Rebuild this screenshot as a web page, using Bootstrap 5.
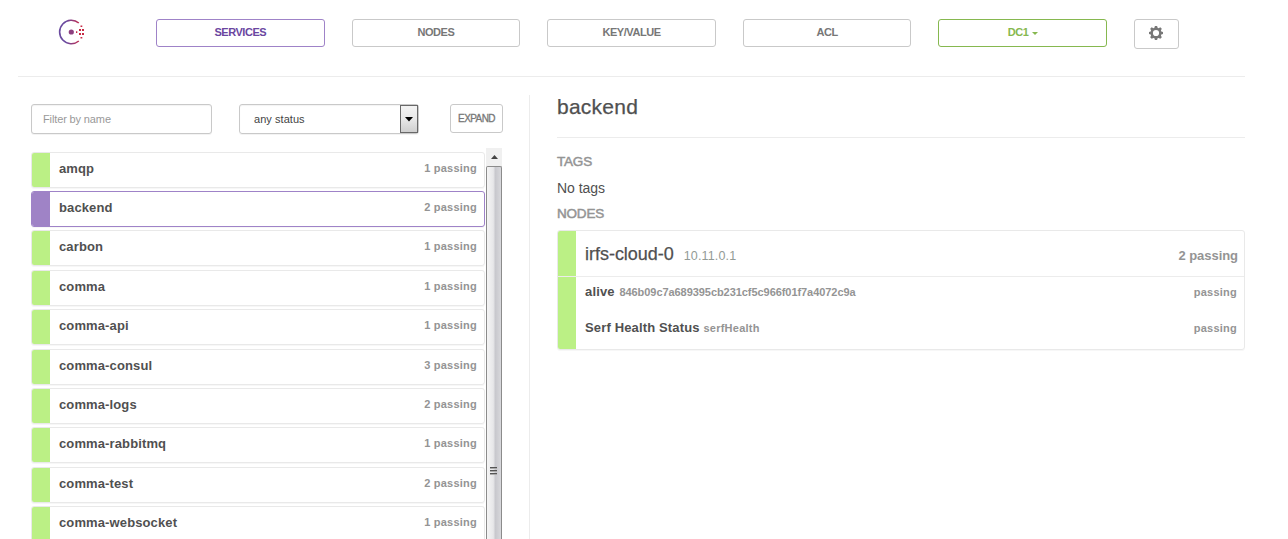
<!DOCTYPE html>
<html lang="en">
<head>
<meta charset="utf-8">
<title>Consul</title>
<link href="https://cdn.jsdelivr.net/npm/bootstrap@5.3.0/dist/css/bootstrap.min.css" rel="stylesheet">
<style>
body{font-family:"Liberation Sans",Arial,sans-serif;color:#505050;background:#fff;height:539px;overflow:hidden;line-height:20px;font-size:14px}
.topbar{margin:0 43px 0 18px;height:77px;border-bottom:1px solid #ececec;padding:19px 0 0 40px}
.logo{width:27px;height:27px;margin-right:71px}
.tabs{gap:27px}
.tab-btn{width:168.6px;height:28px;border:1px solid #c9c9c9;border-radius:3px;padding:0;font-size:11px;font-weight:700;line-height:25px;color:#777;letter-spacing:-.45px}
.tab-btn.current{border-color:#9f83c8;color:#6b469f}
.tab-btn.dc{border-color:#86b84f;color:#86b84f}
.caret{display:inline-block;border:3px solid transparent;border-top-color:currentColor;border-bottom:0;margin-left:3px;vertical-align:1px}
.gear{width:45px;height:30px;border:1px solid #c9c9c9;border-radius:3px;padding:0 0 2px;color:#777}
.gear svg{display:block;margin:0 auto}
.side{width:512px;height:444px;margin-top:18px;border-right:1px solid #ececec;margin-left:18px;padding:9px 26px 0 13px;flex:none}
.filters{height:44px}
.field{height:30px;border:1px solid #c9c9c9;border-radius:3px;font-size:11px;box-shadow:inset 0 1px 1px rgba(0,0,0,.05),0 1px 0 #f3f3f3;padding:0;flex:none}
.name-filter{width:181px;padding-left:11px;color:#505050;letter-spacing:-.13px}
.name-filter::placeholder{color:#999;opacity:1}
.status-filter{width:180px;margin-left:27px;padding-left:14px;color:#444;letter-spacing:.05px}
.drop{width:18px;height:28px;border:1px solid #686868;background:linear-gradient(#f3f3f3,#e8e8e8 50%,#cfcfcf)}
.expand{width:53px;height:29px;margin-left:31px;border:1px solid #c9c9c9;border-radius:3px;padding:0;font-size:10px;color:#777;line-height:27px;-webkit-text-stroke:.3px #777;letter-spacing:-.6px;flex:none}
.results{height:391px;overflow:hidden}
.services{width:454px;padding-top:3.5px}
.service{height:36px;margin-bottom:3.42px;border:1px solid #e9e9e9;border-radius:3px;overflow:hidden;box-shadow:0 1px 0 #f7f7f7;flex:none}
.bar{width:18px;background:#bbf085;flex:none}
.service.active{border-color:#9f83c8}
.service.active .bar{background:#9f83c6}
.sname{font-weight:700;font-size:13px;padding:6px 0 0 9px;letter-spacing:.12px}
.count{font-weight:700;font-size:11px;color:#949494;padding:5px 7px 0 0;letter-spacing:.23px}
.scroll{width:16px;margin-left:1px;background:#f0f0f0}
.arrow{height:18px}
.thumb{background:linear-gradient(90deg,#f5f5f5,#e7e7e9 45%,#c8c8cd 60%,#d8d8dc);border:1px solid #8b8b8b;border-width:1px 1px 0;border-radius:2px 2px 0 0;padding-top:299px}
.thumb svg{margin-left:3px}
.detail{margin:18px 43px 0 27px;min-width:0}
.detail h1{font-size:21px;line-height:24px;height:43px;margin:0;border-bottom:1px solid #ececec;letter-spacing:.25px;-webkit-text-stroke:.25px #505050}
.detail h2{font-size:13.5px;font-weight:400;line-height:20px;margin:0;color:#949494;-webkit-text-stroke:.5px #949494;letter-spacing:-.2px}
.detail .tag-head{margin-top:14px}
.tags{font-size:14px;line-height:20px;margin:6px 0;letter-spacing:-.05px}
.node{border:1px solid #e9e9e9;border-radius:3px;box-shadow:0 1px 0 #f7f7f7;height:120px;overflow:hidden;margin-top:6px}
.node-head{height:46px;border-bottom:1px solid #ececec}
.host{font-size:18px;padding:13px 0 0 9px;letter-spacing:-.02px;-webkit-text-stroke:.25px #505050}
.ip{font-size:12.5px;color:#939b96;margin-left:5px;-webkit-text-stroke:0;letter-spacing:.15px}
.total{font-size:13px;color:#949494;padding:15px 6px 0 0;letter-spacing:-.05px}
.checks{padding:5px 7px 0 9px}
.check{height:36px;font-size:13px;font-weight:700}
.check-name{letter-spacing:.15px}
.check small{font-size:11px;color:#949494;letter-spacing:.25px}
.check .hash{letter-spacing:-.06px;margin-left:1px}
</style>
</head>
<body>
<header class="topbar d-flex">
<svg class="logo" viewBox="0 0 27 27"><defs><linearGradient id="ring"><stop offset=".35" stop-color="#6a4a9f"/><stop offset=".95" stop-color="#b82f58"/></linearGradient></defs><path d="M20.8 4A11.7 11.7 0 1 0 20.8 22" fill="none" stroke="url(#ring)" stroke-width="1.6"/><circle cx="13.3" cy="13" r="2.6" fill="#8d3f7f"/><g fill="#c62a45"><path d="M18 12.3h1.3v1.7H18zM21 10h2v2h-2zM24 10h2v2h-2zM21 14h2v2h-2zM24 14h2v2h-2zM22.5 6.5h1.8v1.6h-1.8zM22.5 18h1.8v1.6h-1.8z"/></g></svg>
<nav class="tabs d-flex">
<a class="btn tab-btn current">SERVICES</a><a class="btn tab-btn">NODES</a><a class="btn tab-btn">KEY/VALUE</a><a class="btn tab-btn">ACL</a><a class="btn tab-btn dc">DC1<span class="caret"></span></a>
<button class="btn gear" aria-label="Settings"><svg width="14" height="14" viewBox="0 0 14 14"><path fill="currentColor" fill-rule="evenodd" d="M5.9 0h2.2l.5 1.8 1 .4 1.7-.9 1.5 1.5-.9 1.7.4 1 1.7.5v2.1l-1.7.5-.4 1 .9 1.7-1.5 1.5-1.7-.9-1 .4L8.1 14H5.9l-.5-1.7-1-.4-1.7.9-1.5-1.5.9-1.7-.4-1L0 8.1V6l1.7-.5.4-1-.9-1.7 1.5-1.5 1.7.9 1-.4zM7 3.9a3.1 3.1 0 1 0 0 6.2 3.1 3.1 0 0 0 0-6.2z"/></svg></button>
</nav>
</header>
<main class="d-flex">
<section class="side">
<div class="filters d-flex">
<input class="field name-filter" placeholder="Filter by name">
<div class="field status-filter d-flex justify-content-between align-items-center"><span>any status</span><span class="drop d-flex align-items-center justify-content-center"><svg width="8" height="5"><path d="M0 0h8L4 4.5z" fill="#000"/></svg></span></div>
<button class="btn expand">EXPAND</button>
</div>
<div class="results d-flex">
<div class="services d-flex flex-column">
<div class="service d-flex"><div class="bar"></div><div class="sname">amqp</div><div class="count ms-auto">1 passing</div></div>
<div class="service active d-flex"><div class="bar"></div><div class="sname">backend</div><div class="count ms-auto">2 passing</div></div>
<div class="service d-flex"><div class="bar"></div><div class="sname">carbon</div><div class="count ms-auto">1 passing</div></div>
<div class="service d-flex"><div class="bar"></div><div class="sname">comma</div><div class="count ms-auto">1 passing</div></div>
<div class="service d-flex"><div class="bar"></div><div class="sname">comma-api</div><div class="count ms-auto">1 passing</div></div>
<div class="service d-flex"><div class="bar"></div><div class="sname">comma-consul</div><div class="count ms-auto">3 passing</div></div>
<div class="service d-flex"><div class="bar"></div><div class="sname">comma-logs</div><div class="count ms-auto">2 passing</div></div>
<div class="service d-flex"><div class="bar"></div><div class="sname">comma-rabbitmq</div><div class="count ms-auto">1 passing</div></div>
<div class="service d-flex"><div class="bar"></div><div class="sname">comma-test</div><div class="count ms-auto">2 passing</div></div>
<div class="service d-flex"><div class="bar"></div><div class="sname">comma-websocket</div><div class="count ms-auto">1 passing</div></div>
</div>
<div class="scroll d-flex flex-column">
<div class="arrow d-flex align-items-center justify-content-center"><svg width="7" height="4"><path d="M0 4h7L3.5 0z" fill="#444"/></svg></div>
<div class="thumb flex-grow-1"><svg class="d-block" width="7" height="9"><path d="M0 1.5h7M0 4.5h7M0 7.5h7" stroke="#555"/><path d="M0 2.5h7M0 5.5h7M0 8.5h7" stroke="#aaa"/></svg></div>
</div>
</div>
</section>
<section class="detail flex-grow-1">
<h1>backend</h1>
<h2 class="tag-head">TAGS</h2>
<p class="tags">No tags</p>
<h2>NODES</h2>
<div class="node d-flex flex-column">
<div class="node-head d-flex flex-shrink-0"><div class="bar"></div><div class="host">irfs-cloud-0 <span class="ip">10.11.0.1</span></div><div class="ms-auto fw-bold total">2 passing</div></div>
<div class="d-flex flex-grow-1"><div class="bar"></div><div class="checks flex-grow-1">
<div class="check d-flex justify-content-between"><div class="check-name">alive <small class="hash">846b09c7a689395cb231cf5c966f01f7a4072c9a</small></div><small>passing</small></div>
<div class="check d-flex justify-content-between"><div class="check-name">Serf Health Status <small>serfHealth</small></div><small>passing</small></div>
</div></div>
</div>
</section>
</main>
<script src="https://cdn.jsdelivr.net/npm/bootstrap@5.3.0/dist/js/bootstrap.bundle.min.js"></script>
</body>
</html>
